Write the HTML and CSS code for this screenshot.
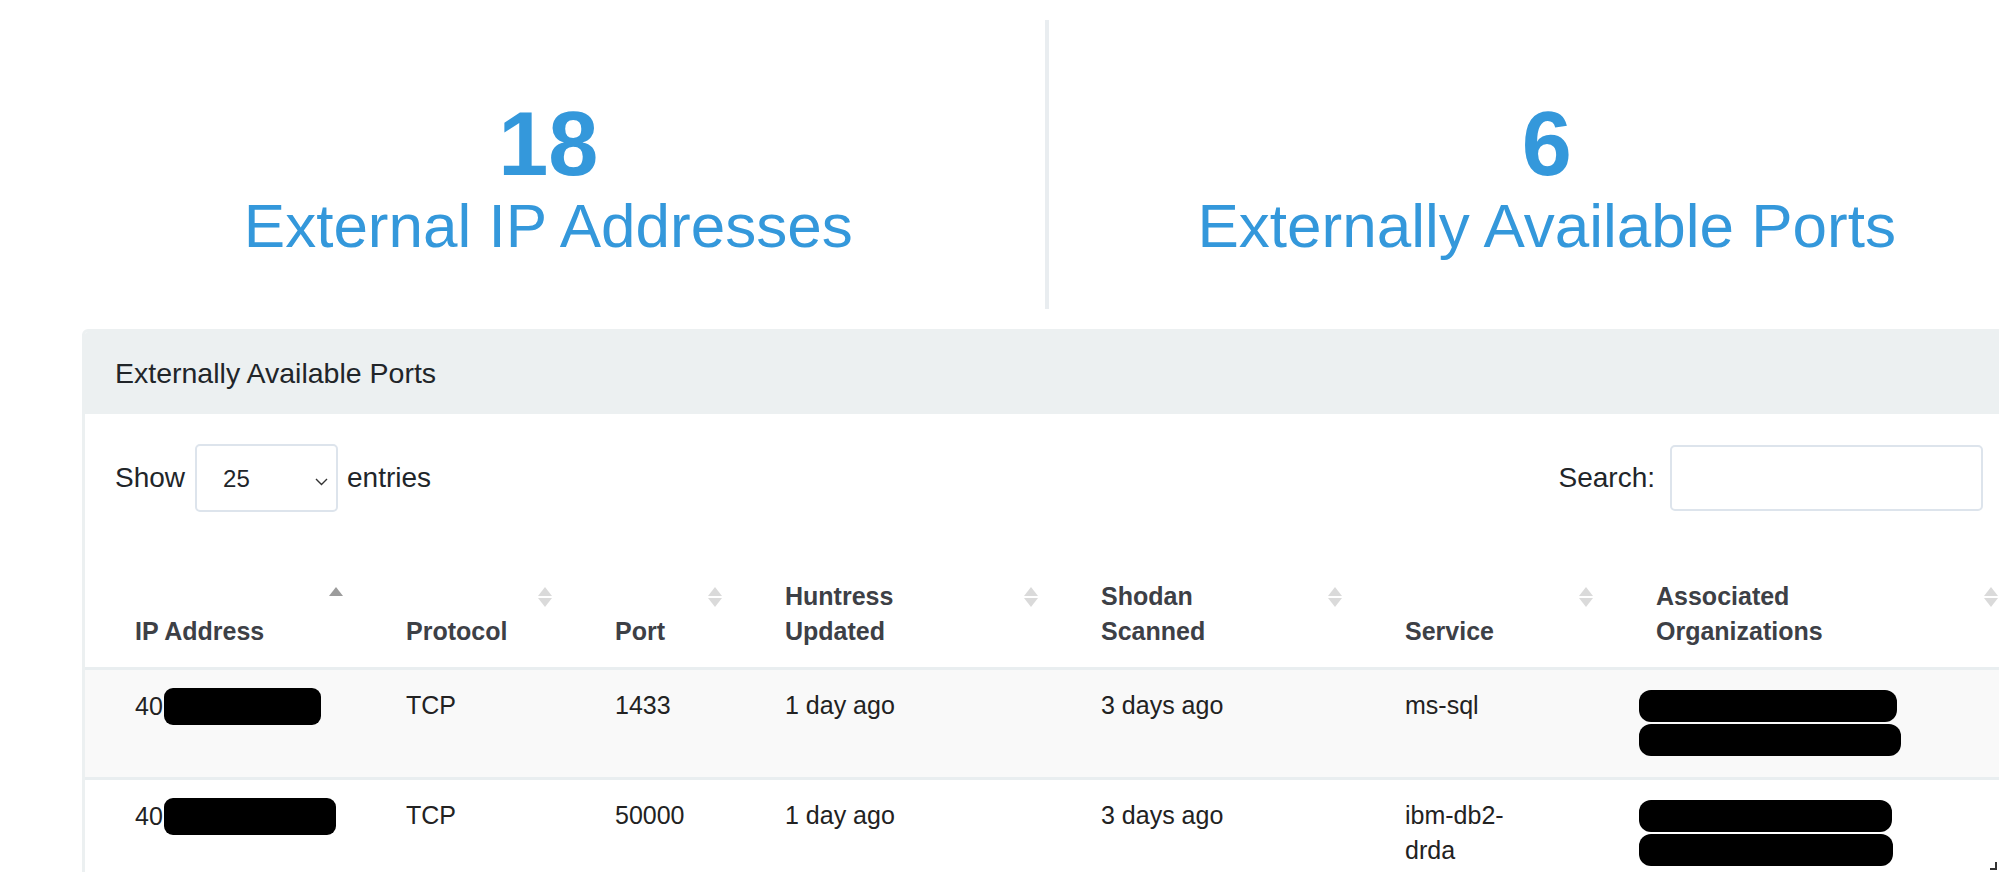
FILE: index.html
```html
<!DOCTYPE html>
<html lang="en">
<head>
  <meta charset="UTF-8" />
  <meta name="viewport" content="width=device-width, initial-scale=1.0" />
  <title>External Exposure</title>
  <link rel="stylesheet" href="styles.css">
</head>
<body>

  <div class="page">
    <div class="stats">
      <div class="stat">
        <div class="stat-value">18</div>
        <div class="stat-label">External IP Addresses</div>
      </div>
      <div class="stat">
        <div class="stat-value">6</div>
        <div class="stat-label">Externally Available Ports</div>
      </div>
    </div>

    <div class="card">
      <div class="card-header">Externally Available Ports</div>
      <div class="card-body">
        <div class="table-controls">
          <label class="length-control">Show
            <span class="select-wrap">
              <select name="length">
                <option>10</option>
                <option selected>25</option>
                <option>50</option>
                <option>100</option>
              </select>
              <svg class="chevron" width="13" height="8" viewBox="0 0 13 8"><path d="M1 1l5.5 5.5L12 1" fill="none" stroke="#333" stroke-width="1.4"/></svg>
            </span>
            entries</label>
          <label class="search-control">Search: <input type="search"></label>
        </div>

        <table class="ports">
          <colgroup>
            <col style="width: 271px">
            <col style="width: 209px">
            <col style="width: 170px">
            <col style="width: 316px">
            <col style="width: 304px">
            <col style="width: 251px">
            <col>
          </colgroup>
          <thead>
            <tr>
              <th class="sorting sorting-asc">IP Address</th>
              <th class="sorting">Protocol</th>
              <th class="sorting">Port</th>
              <th class="sorting">Huntress Updated</th>
              <th class="sorting">Shodan Scanned</th>
              <th class="sorting">Service</th>
              <th class="sorting">Associated Organizations</th>
            </tr>
          </thead>
          <tbody>
            <tr>
              <td class="ip">40<span class="redact redact-ip" style="width: 157px"></span></td>
              <td>TCP</td>
              <td>1433</td>
              <td>1 day ago</td>
              <td>3 days ago</td>
              <td>ms-sql</td>
              <td>
                <span class="redact redact-org" style="width: 258px"></span>
                <span class="redact redact-org" style="width: 262px"></span>
              </td>
            </tr>
            <tr>
              <td class="ip">40<span class="redact redact-ip" style="width: 172px"></span></td>
              <td>TCP</td>
              <td>50000</td>
              <td>1 day ago</td>
              <td>3 days ago</td>
              <td>ibm-db2-drda</td>
              <td>
                <span class="redact redact-org" style="width: 253px"></span>
                <span class="redact redact-org" style="width: 254px"></span>
              </td>
            </tr>
          </tbody>
        </table>
      </div>
    </div>
  </div>

  <div class="grip"></div>

</body>
</html>
```

FILE: styles.css
```css
/* Global Styles */
* {
  box-sizing: border-box;
  margin: 0;
  padding: 0;
}
html,
body {
  overflow: hidden;
}
body {
  font-family: "Liberation Sans", Arial, sans-serif;
  color: #212529;
  background: #fff;
}

.page {
  margin-left: 82px;
  width: 1932px;
}

/* Top counters */
.stats {
  display: grid;
  grid-template-columns: 1fr 1fr;
  margin: 20px -31px 0 -30px;
}
.stat {
  text-align: center;
  padding: 79px 0 46px;
  color: #3498db;
}
.stat:first-child {
  border-right: 4px solid #e9edf0;
}
.stat-value {
  font-size: 90px;
  line-height: 90px;
  font-weight: bold;
}
.stat-label {
  font-size: 62px;
  line-height: 74px;
}

/* Card */
.card {
  margin-top: 20px;
  border: 3px solid #ecf0f1;
  border-radius: 6px;
  overflow: hidden;
}
.card-header {
  background: #ecf0f1;
  padding: 21px 30px;
  font-size: 28.5px;
  line-height: 40px;
}

.table-controls {
  display: flex;
  justify-content: space-between;
  align-items: center;
  padding: 30px 28px 0 30px;
  font-size: 28px;
}
.length-control,
.search-control {
  display: flex;
  align-items: center;
}
.select-wrap {
  position: relative;
  margin: 0 9px 0 10px;
}
.select-wrap select {
  appearance: none;
  -webkit-appearance: none;
  width: 143px;
  height: 68px;
  padding: 1px 0 0 26px;
  border: 2px solid #dde4ec;
  border-radius: 5px;
  background: #fff;
  font-family: inherit;
  font-size: 24px;
  color: #212529;
  outline: none;
}
.chevron {
  position: absolute;
  left: 120px;
  top: 34px;
}
.search-control input {
  width: 313px;
  height: 66px;
  margin-left: 15px;
  border: 2px solid #dde4ec;
  border-radius: 5px;
  font-size: 24px;
  outline: none;
}

/* Table */
.ports {
  width: 100%;
  margin-top: 49px;
  border-collapse: collapse;
  table-layout: fixed;
  font-size: 25px;
  line-height: 35px;
}
.ports th {
  position: relative;
  text-align: left;
  vertical-align: bottom;
  padding: 18px 60px 18px 50px;
  color: #3d4046;
  border-bottom: 3px solid #e9eef0;
}
.ports td {
  vertical-align: top;
  padding: 18px 70px 20px 50px;
  color: #222;
  border-top: 3px solid #e9eef0;
}
.ports td.ip {
  white-space: nowrap;
}
.ports tbody tr:nth-child(odd) {
  background: #f9f9f9;
}

/* Sort arrows */
.sorting::before,
.sorting::after {
  content: "";
  position: absolute;
  right: 13px;
  width: 0;
  height: 0;
  border-left: 7.5px solid transparent;
  border-right: 7.5px solid transparent;
}
.sorting::before {
  top: 26px;
  border-bottom: 9px solid #dadada;
}
.sorting::after {
  top: 37px;
  border-top: 9px solid #dadada;
}
.sorting-asc::before {
  border-bottom-color: #9c9c9c;
}
.sorting-asc::after {
  display: none;
}

/* Redaction marks */
.redact {
  background: #000;
}
.redact-ip {
  display: inline-block;
  height: 37px;
  margin-left: 1px;
  border-radius: 9px;
  vertical-align: -10px;
}
.redact-org {
  display: block;
  height: 32px;
  margin: 2px 0 1px -17px;
  border-radius: 12px;
}

.grip {
  position: fixed;
  right: 2px;
  bottom: 2px;
  width: 7px;
  height: 8px;
  border-right: 2px solid #333;
  border-bottom: 2px solid #333;
}
```
